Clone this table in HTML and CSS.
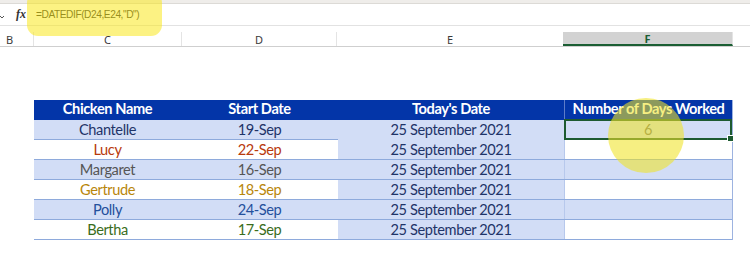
FILE: index.html
```html
<!DOCTYPE html>
<html>
<head>
<meta charset="utf-8">
<link rel="stylesheet" href="styles.css">
</head>
<body>
<div class="sheet">
  <div class="topbar"></div>
  <div class="formula-bar">
    <svg class="chev" width="6" height="8" viewBox="0 0 6 8"><path d="M-2 2 L2 6 L4 4" fill="none" stroke="#555" stroke-width="1"/></svg>
    <span class="fx">fx</span>
    <span class="formula">=DATEDIF(D24,E24,"D")</span>
  </div>
  <div class="col-headers">
    <div class="ch ch-b">B</div>
    <div class="ch ch-c">C</div>
    <div class="ch ch-d">D</div>
    <div class="ch ch-e">E</div>
    <div class="ch ch-f">F</div>
    <div class="ch ch-g"></div>
  </div>
  <div class="table">
    <div class="row head">
      <div class="cell">Chicken Name</div>
      <div class="cell">Start Date</div>
      <div class="cell">Today's Date</div>
      <div class="cell last">Number of Days Worked</div>
    </div>
    <div class="row band c-navy">
      <div class="cell">Chantelle</div>
      <div class="cell">19-Sep</div>
      <div class="cell today">25 September 2021</div>
      <div class="cell last selected">6</div>
    </div>
    <div class="row c-red">
      <div class="cell">Lucy</div>
      <div class="cell">22-Sep</div>
      <div class="cell today">25 September 2021</div>
      <div class="cell last"></div>
    </div>
    <div class="row band c-gray">
      <div class="cell">Margaret</div>
      <div class="cell">16-Sep</div>
      <div class="cell today">25 September 2021</div>
      <div class="cell last"></div>
    </div>
    <div class="row c-gold">
      <div class="cell">Gertrude</div>
      <div class="cell">18-Sep</div>
      <div class="cell today">25 September 2021</div>
      <div class="cell last"></div>
    </div>
    <div class="row band c-blue">
      <div class="cell">Polly</div>
      <div class="cell">24-Sep</div>
      <div class="cell today">25 September 2021</div>
      <div class="cell last"></div>
    </div>
    <div class="row c-green">
      <div class="cell">Bertha</div>
      <div class="cell">17-Sep</div>
      <div class="cell today">25 September 2021</div>
      <div class="cell last"></div>
    </div>
  </div>
  <div class="hl-formula"></div>
  <div class="hl-circle"></div>
</div>
</body>
</html>
```

FILE: styles.css
```css
* { box-sizing: border-box; }
html, body { margin: 0; padding: 0; background: #ffffff; }
body { width: 750px; height: 257px; overflow: hidden; }

.sheet {
  position: relative;
  width: 750px;
  height: 257px;
  font-family: "Lato", "Open Sans", sans-serif;
}

.topbar {
  height: 4px;
  background: #efedea;
  border-bottom: 1px solid #dcdad6;
}

.formula-bar {
  height: 22px;
  display: flex;
  align-items: center;
  border-bottom: 1px solid #e2e2e2;
  position: relative;
  z-index: 2;
}
.chev {
  display: block;
  width: 6px;
  margin-top: 2px;
}
.fx {
  font-family: "Liberation Serif", serif;
  font-style: italic;
  font-weight: bold;
  font-size: 12px;
  color: #333;
  width: 23px;
  padding-left: 10px;
}
.formula {
  margin-left: 7px;
  font-family: "Liberation Sans", Arial, sans-serif;
  font-size: 10.2px;
  color: #222;
  letter-spacing: -0.45px;
}

.col-headers {
  margin-top: 6px;
  height: 15px;
  display: flex;
  font-family: "Noto Sans", "Open Sans", sans-serif;
  font-size: 11px;
  color: #3a3a3a;
  border-bottom: 1px solid #cfcfcf;
}
.ch {
  height: 100%;
  display: flex;
  align-items: center;
  justify-content: center;
  border-right: 1px solid #e4e4e4;
  line-height: 1;
}
.ch-b { width: 34px; justify-content: flex-start; padding-left: 6px; }
.ch-c { width: 148px; }
.ch-d { width: 155px; }
.ch-e { width: 226px; border-right: none; }
.ch-f {
  width: 170px;
  background: #d2d2d2;
  border-bottom: 2px solid #1b5e33;
  font-weight: bold;
  color: #1b5e33;
  padding-top: 1px;
}
.ch-g { flex: 1; border-right: none; }

.table {
  margin-top: 53px;
  margin-left: 34px;
  width: 699px;
  font-size: 14.6px;
  letter-spacing: -0.4px;
  border-right: 1px solid #9db3e0;
}
.row {
  display: grid;
  grid-template-columns: 147px 157px 226px 168px;
  height: 20px;
  border-bottom: 1px solid #8eaadc;
  background: #ffffff;
}
.row.band { background: #d2ddf6; }
.cell {
  display: flex;
  align-items: center;
  justify-content: center;
  line-height: 1;
  padding-top: 1px;
}
.cell.today { background: #d2ddf6; color: #1f3468; }
.row .cell.last { border-left: 1px solid #b7c8ec; }

.row.head {
  background: #0335a8;
  color: #ffffff;
  font-weight: bold;
  border-bottom: none;
  height: 20px;
}
.row.head .cell { padding-top: 0; padding-bottom: 1px; }
.row.head .cell.last { border-left: 1px solid #5d7cc9; }

.c-navy { color: #1f3468; }
.c-red { color: #b83a0c; }
.c-gray { color: #555555; }
.c-gold { color: #b8860b; }
.c-blue { color: #24509c; }
.c-green { color: #3a6d1c; }

.cell.selected {
  position: relative;
  border: 2px solid #1d5a30 !important;
  color: #666666;
  margin-top: -1px;
  height: 21px;
}
.cell.selected::after {
  content: "";
  position: absolute;
  right: -4px;
  bottom: -4px;
  width: 5px;
  height: 5px;
  background: #1d5a30;
  border: 1px solid #fff;
}

.hl-formula {
  position: absolute;
  left: 27px;
  top: -8px;
  width: 135px;
  height: 44px;
  border-radius: 11px;
  background: rgba(250, 232, 30, 0.55);
  z-index: 3;
}
.hl-circle {
  position: absolute;
  left: 608px;
  top: 98px;
  width: 76px;
  height: 75px;
  border-radius: 50%;
  background: rgba(240, 228, 40, 0.58);
  z-index: 3;
}
```
